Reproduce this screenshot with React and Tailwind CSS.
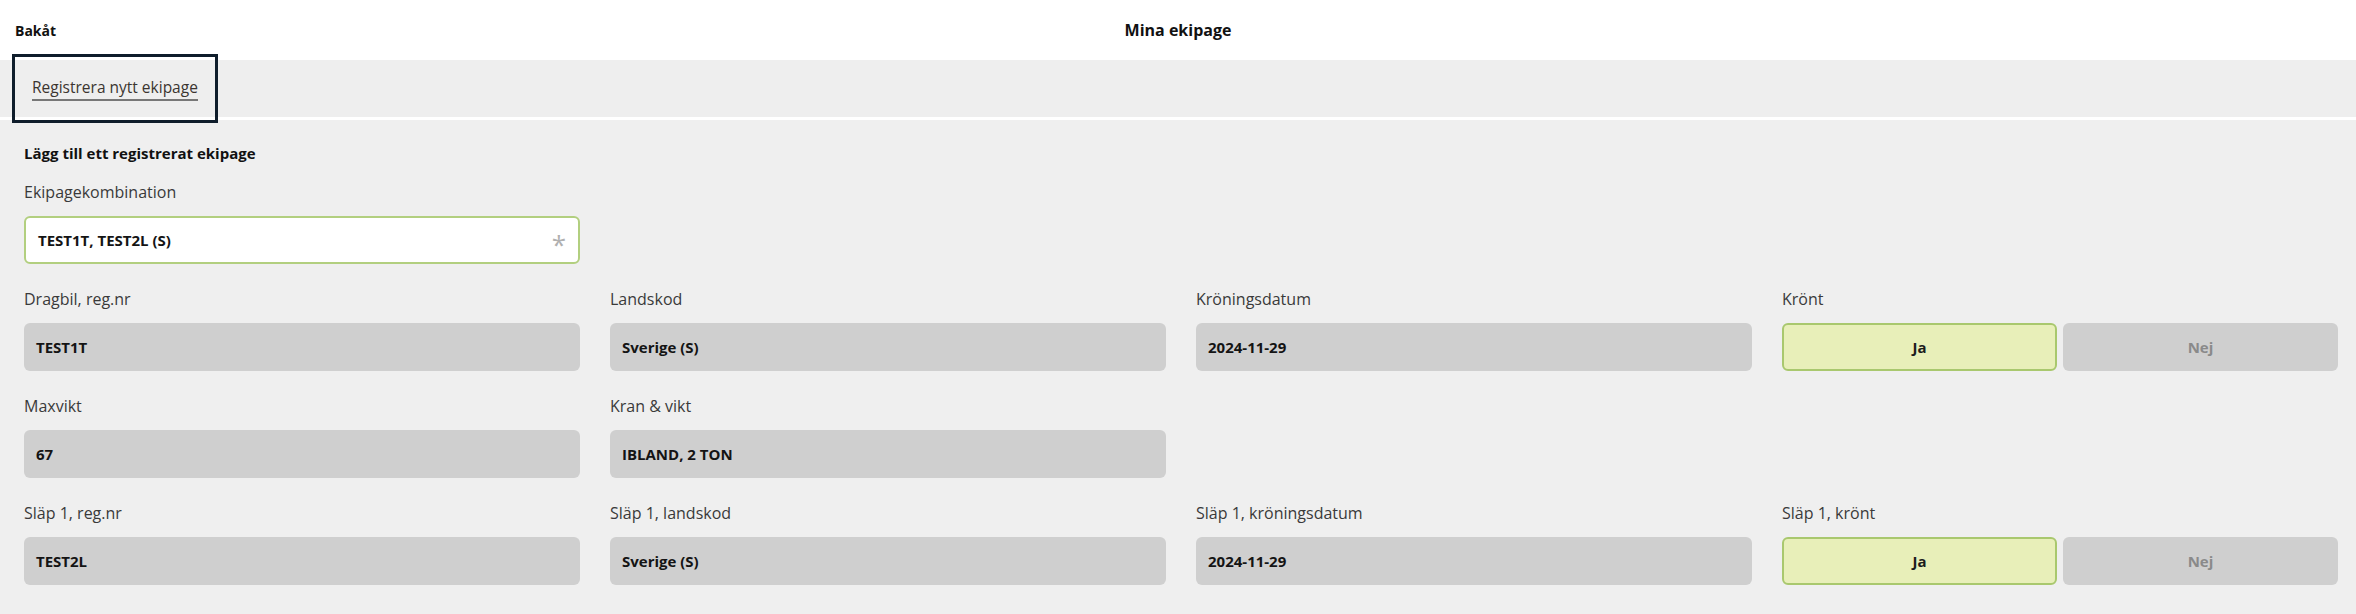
import React from 'react';

const fields = [
    [
        { label: 'Dragbil, reg.nr', value: 'TEST1T' },
        { label: 'Landskod', value: 'Sverige (S)' },
        { label: 'Kröningsdatum', value: '2024-11-29' },
        { label: 'Krönt', toggle: true },
    ],
    [
        { label: 'Maxvikt', value: '67' },
        { label: 'Kran & vikt', value: 'IBLAND, 2 TON' },
        null,
        null,
    ],
    [
        { label: 'Släp 1, reg.nr', value: 'TEST2L' },
        { label: 'Släp 1, landskod', value: 'Sverige (S)' },
        { label: 'Släp 1, kröningsdatum', value: '2024-11-29' },
        { label: 'Släp 1, krönt', toggle: true },
    ],
];

function Label({ children }) {
    return <div className="h-[20px] leading-[20px] text-[16px] text-[#3a3a3a]">{children}</div>;
}

function Field({ field }) {
    if (!field) return <div />;
    return (
        <div className="flex flex-col gap-[14px]">
            <Label>{field.label}</Label>
            {field.toggle ? (
                <div className="grid grid-cols-2 gap-[6px]">
                    <div className="h-[48px] flex items-center justify-center rounded-[6px] border-2 border-[#a9c86e] bg-[#e8efb9] font-bold text-[15px] text-[#1c1c1c]">
                        Ja
                    </div>
                    <div className="h-[48px] flex items-center justify-center rounded-[6px] bg-[#cfcfcf] font-bold text-[15px] text-[#8a8a8a]">
                        Nej
                    </div>
                </div>
            ) : (
                <div className="h-[48px] flex items-center px-3 rounded-[6px] bg-[#cfcfcf] font-bold text-[15px] text-[#141414]">
                    {field.value}
                </div>
            )}
        </div>
    );
}

export default function App() {
    return (
        <div className="w-[2356px] h-[614px] bg-[#efefef] font-['Open_Sans',sans-serif] overflow-hidden">
            {/* Topprad */}
            <div className="h-[60px] bg-white grid grid-cols-[1fr_auto_1fr] items-center px-[15px]">
                <div className="font-bold text-[14px] text-[#111]">Bakåt</div>
                <div className="font-bold text-[16px] text-[#111]">Mina ekipage</div>
                <div />
            </div>

            {/* Flikar */}
            <div className="h-[57px] bg-[#eeeeee] px-[18px] flex">
                <div className="h-full px-[14px] flex items-center outline-[3px] outline-[#0f1d2b] outline-offset-[3px]">
                    <span className="text-[15.5px] text-[#3b3530] border-b-2 border-[#777] leading-[22px] pb-[1px]">
                        Registrera nytt ekipage
                    </span>
                </div>
            </div>
            <div className="h-[3px] bg-white" />

            {/* Formulär */}
            <div className="pt-[23px] pl-[24px] pr-[18px]">
                <div className="font-bold text-[15px] leading-[20px] text-[#111]">
                    Lägg till ett registrerat ekipage
                </div>

                <div className="grid grid-cols-4 gap-x-[30px] mt-[19px]">
                    <div className="flex flex-col gap-[14px]">
                        <Label>Ekipagekombination</Label>
                        <div className="h-[48px] flex items-center justify-between px-3 rounded-[6px] border-2 border-[#b2cf7f] bg-white">
                            <span className="font-bold text-[15px] text-[#141414]">TEST1T, TEST2L (S)</span>
                            <span className="text-[26px] leading-none text-[#b0b0b0] pt-[8px]">*</span>
                        </div>
                    </div>
                </div>

                <div className="grid grid-cols-4 gap-x-[30px] gap-y-[25px] mt-[25px]">
                    {fields.flat().map((f, i) => (
                        <Field key={i} field={f} />
                    ))}
                </div>
            </div>
        </div>
    );
}
